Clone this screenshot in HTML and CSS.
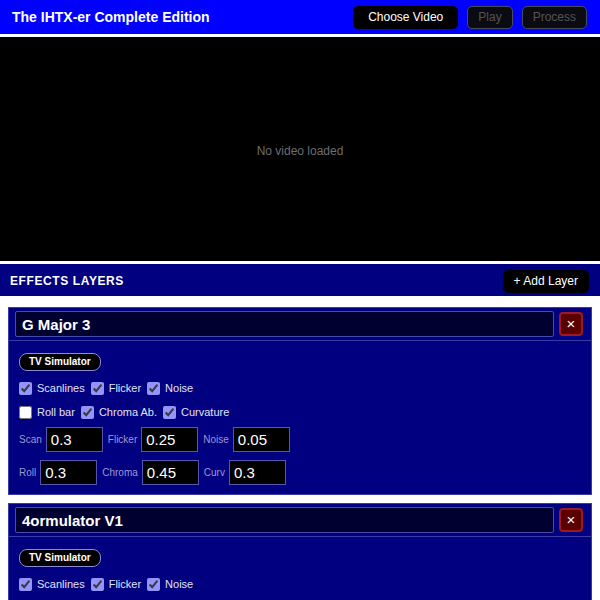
FILE: index.html
```html
<!DOCTYPE html>
<html>
<head>
<meta charset="utf-8">
<link rel="stylesheet" href="styles.css">
</head>
<body>
<header class="topbar">
  <h1 class="title">The IHTX-er Complete Edition</h1>
  <div class="actions">
    <button class="btn primary">Choose Video</button>
    <button class="btn" disabled>Play</button>
    <button class="btn" disabled>Process</button>
  </div>
</header>
<section class="video">
  <span class="empty">No video loaded</span>
</section>
<section class="effects-head">
  <h2 class="effects-title">EFFECTS LAYERS</h2>
  <button class="btn add">+ Add Layer</button>
</section>
<section class="layers">
  <div class="layer">
    <div class="layer-head">
      <input class="layer-name" type="text" value="G Major 3">
      <button class="del">×</button>
    </div>
    <div class="layer-body">
      <div class="pill-row"><span class="pill">TV Simulator</span></div>
      <div class="checks">
        <label class="chk"><input type="checkbox" checked>Scanlines</label>
        <label class="chk"><input type="checkbox" checked>Flicker</label>
        <label class="chk"><input type="checkbox" checked>Noise</label>
      </div>
      <div class="checks">
        <label class="chk"><input type="checkbox">Roll bar</label>
        <label class="chk"><input type="checkbox" checked>Chroma Ab.</label>
        <label class="chk"><input type="checkbox" checked>Curvature</label>
      </div>
      <div class="nums">
        <label class="num"><span>Scan</span><input type="text" value="0.3"></label>
        <label class="num"><span>Flicker</span><input type="text" value="0.25"></label>
        <label class="num"><span>Noise</span><input type="text" value="0.05"></label>
      </div>
      <div class="nums">
        <label class="num"><span>Roll</span><input type="text" value="0.3"></label>
        <label class="num"><span>Chroma</span><input type="text" value="0.45"></label>
        <label class="num"><span>Curv</span><input type="text" value="0.3"></label>
      </div>
    </div>
  </div>
  <div class="layer">
    <div class="layer-head">
      <input class="layer-name" type="text" value="4ormulator V1">
      <button class="del">×</button>
    </div>
    <div class="layer-body">
      <div class="pill-row"><span class="pill">TV Simulator</span></div>
      <div class="checks">
        <label class="chk"><input type="checkbox" checked>Scanlines</label>
        <label class="chk"><input type="checkbox" checked>Flicker</label>
        <label class="chk"><input type="checkbox" checked>Noise</label>
      </div>
    </div>
  </div>
</section>
</body>
</html>
```

FILE: styles.css
```css
* { box-sizing: border-box; }
html, body { margin: 0; padding: 0; background: #fff; }
body {
  font-family: "Liberation Sans", Arial, sans-serif;
  color: #fff;
  width: 600px;
  height: 600px;
  overflow: hidden;
}
.topbar {
  height: 37px;
  background: #0000ff;
  border-bottom: 3px solid #fff;
  display: flex;
  align-items: center;
  justify-content: space-between;
  padding: 0 13px 0 12px;
}
.title {
  margin: 0;
  font-size: 14px;
  font-weight: bold;
  line-height: 17px;
}
.actions { display: flex; gap: 9px; }
.btn {
  font-family: "Liberation Sans", Arial, sans-serif;
  font-size: 12px;
  line-height: 15px;
  padding: 3px 10px;
  background: #000;
  color: #fff;
  border: 1px solid #000;
  border-radius: 5px;
}
.primary { padding: 3px 14px; }
.btn:disabled {
  background: #0b0b12;
  color: #555;
  border-color: #4a4a5a;
}
.video {
  height: 227px;
  background: #000;
  border-bottom: 3px solid #fff;
  display: flex;
  align-items: center;
  justify-content: center;
  padding-top: 3px;
}
.empty { color: #6e6e6e; font-size: 12px; }
.effects-head {
  height: 32px;
  background: #000080;
  display: flex;
  align-items: center;
  justify-content: space-between;
  padding: 2px 11px 0 10px;
}
.effects-title {
  margin: 0;
  font-size: 12px;
  font-weight: bold;
  letter-spacing: 0.6px;
}
.add { padding: 3px 10px; }
.layers {
  padding: 11px 8px 0;
  display: flex;
  flex-direction: column;
  gap: 8px;
}
.layer {
  background: #000080;
  border: 1px solid #3b3ba6;
}
.layer-head {
  display: flex;
  align-items: center;
  gap: 5px;
  padding: 3px 8px 3px 6px;
  border-bottom: 1px solid #3b3ba6;
}
.layer-name {
  flex: 1;
  height: 26px;
  background: #000030;
  border: 1px solid #4a4aa8;
  border-radius: 2px;
  color: #fff;
  font-family: "Liberation Sans", Arial, sans-serif;
  font-size: 15px;
  font-weight: bold;
  padding: 0 6px;
  outline: none;
}
.del {
  width: 24px;
  height: 24px;
  padding: 0;
  background: #5a0000;
  border: 2px solid #a01820;
  border-radius: 4px;
  color: #fff;
  font-family: "Liberation Sans", Arial, sans-serif;
  font-size: 15px;
  line-height: 18px;
}
.layer-body {
  padding: 12px 10px 9px;
}
.pill-row { display: flex; margin-bottom: 10px; }
.pill {
  font-size: 10px;
  font-weight: bold;
  line-height: 12px;
  padding: 2px 9px;
  background: #000;
  border: 1px solid #8a8ad0;
  border-radius: 8px;
}
.checks {
  display: flex;
  gap: 6px;
  height: 14px;
  align-items: center;
  margin-bottom: 10px;
}
.checks + .nums { margin-top: -2px; }
.chk {
  display: flex;
  align-items: center;
  gap: 5px;
  font-size: 11px;
  color: #e2e2f6;
}
.chk input {
  margin: 0;
  width: 13px;
  height: 13px;
  accent-color: #9494ff;
}
.nums {
  display: flex;
  gap: 5px;
  margin-bottom: 8px;
}
.nums:last-child { margin-bottom: 0; }
.num {
  display: flex;
  align-items: center;
  gap: 4px;
}
.num span {
  font-size: 10px;
  color: #9a9ad2;
}
.num input {
  width: 57px;
  height: 25px;
  background: #000;
  border: 1px solid #5555b0;
  color: #fff;
  font-family: "Liberation Sans", Arial, sans-serif;
  font-size: 15px;
  padding: 0 4px;
  outline: none;
}
```
